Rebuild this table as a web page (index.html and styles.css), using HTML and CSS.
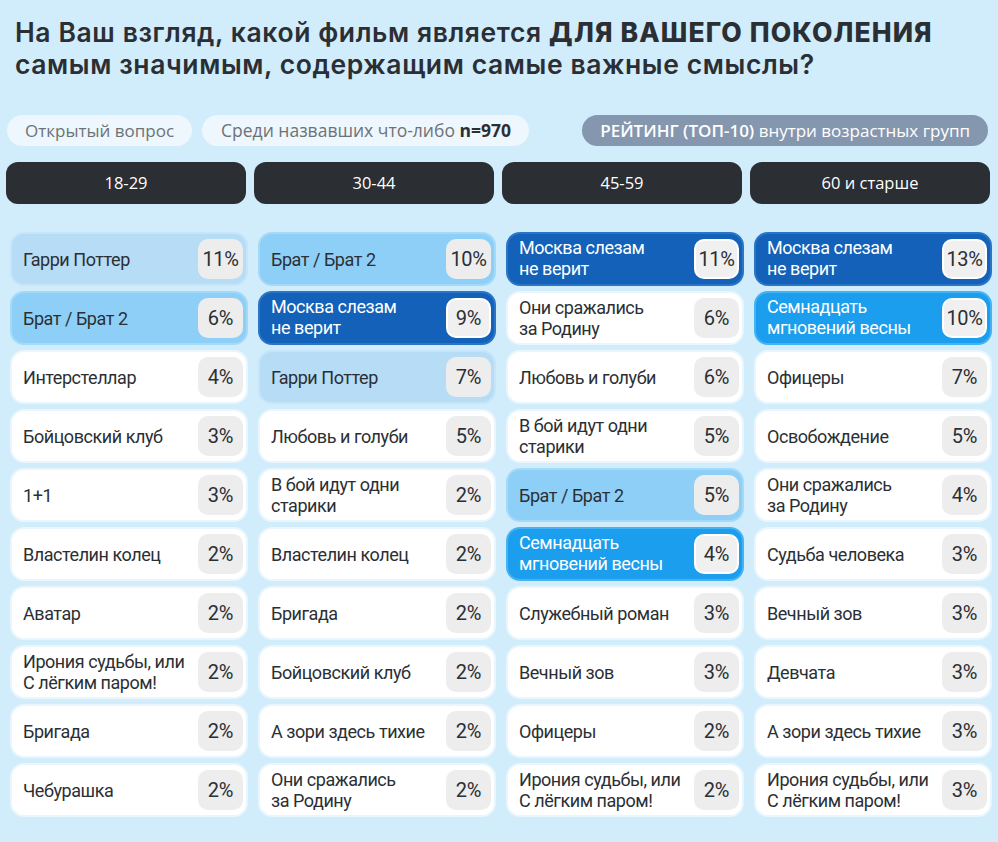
FILE: index.html
```html
<!DOCTYPE html>
<html lang="ru">
<head>
<meta charset="utf-8">
<title>Фильм поколения</title>
<link rel="stylesheet" href="styles.css">
</head>
<body>
<div class="page">
  <h1 class="title">На Ваш взгляд, какой фильм является <b>ДЛЯ ВАШЕГО ПОКОЛЕНИЯ</b><br>самым значимым, содержащим самые важные смыслы?</h1>

  <div class="pills">
    <div class="pill">Открытый вопрос</div>
    <div class="pill pill-n">Среди назвавших что-либо <b>n=970</b></div>
    <div class="pill pill-rating"><b>РЕЙТИНГ (ТОП-10)</b> внутри возрастных групп</div>
  </div>

  <div class="grid">
    <div class="col">
      <div class="head">18-29</div>
      <div class="card c-light"><span class="name">Гарри Поттер</span><span class="pct">11%</span></div>
      <div class="card c-mid"><span class="name">Брат / Брат 2</span><span class="pct">6%</span></div>
      <div class="card"><span class="name">Интерстеллар</span><span class="pct">4%</span></div>
      <div class="card"><span class="name">Бойцовский клуб</span><span class="pct">3%</span></div>
      <div class="card"><span class="name">1+1</span><span class="pct">3%</span></div>
      <div class="card"><span class="name">Властелин колец</span><span class="pct">2%</span></div>
      <div class="card"><span class="name">Аватар</span><span class="pct">2%</span></div>
      <div class="card"><span class="name">Ирония судьбы, или<br>С лёгким паром!</span><span class="pct">2%</span></div>
      <div class="card"><span class="name">Бригада</span><span class="pct">2%</span></div>
      <div class="card"><span class="name">Чебурашка</span><span class="pct">2%</span></div>
    </div>
    <div class="col">
      <div class="head">30-44</div>
      <div class="card c-mid"><span class="name">Брат / Брат 2</span><span class="pct">10%</span></div>
      <div class="card c-dark"><span class="name">Москва слезам<br>не верит</span><span class="pct">9%</span></div>
      <div class="card c-light"><span class="name">Гарри Поттер</span><span class="pct">7%</span></div>
      <div class="card"><span class="name">Любовь и голуби</span><span class="pct">5%</span></div>
      <div class="card"><span class="name">В бой идут одни<br>старики</span><span class="pct">2%</span></div>
      <div class="card"><span class="name">Властелин колец</span><span class="pct">2%</span></div>
      <div class="card"><span class="name">Бригада</span><span class="pct">2%</span></div>
      <div class="card"><span class="name">Бойцовский клуб</span><span class="pct">2%</span></div>
      <div class="card"><span class="name">А зори здесь тихие</span><span class="pct">2%</span></div>
      <div class="card"><span class="name">Они сражались<br>за Родину</span><span class="pct">2%</span></div>
    </div>
    <div class="col">
      <div class="head">45-59</div>
      <div class="card c-dark"><span class="name">Москва слезам<br>не верит</span><span class="pct">11%</span></div>
      <div class="card"><span class="name">Они сражались<br>за Родину</span><span class="pct">6%</span></div>
      <div class="card"><span class="name">Любовь и голуби</span><span class="pct">6%</span></div>
      <div class="card"><span class="name">В бой идут одни<br>старики</span><span class="pct">5%</span></div>
      <div class="card c-mid"><span class="name">Брат / Брат 2</span><span class="pct">5%</span></div>
      <div class="card c-bright"><span class="name">Семнадцать<br>мгновений весны</span><span class="pct">4%</span></div>
      <div class="card"><span class="name">Служебный роман</span><span class="pct">3%</span></div>
      <div class="card"><span class="name">Вечный зов</span><span class="pct">3%</span></div>
      <div class="card"><span class="name">Офицеры</span><span class="pct">2%</span></div>
      <div class="card"><span class="name">Ирония судьбы, или<br>С лёгким паром!</span><span class="pct">2%</span></div>
    </div>
    <div class="col">
      <div class="head">60 и старше</div>
      <div class="card c-dark"><span class="name">Москва слезам<br>не верит</span><span class="pct">13%</span></div>
      <div class="card c-bright"><span class="name">Семнадцать<br>мгновений весны</span><span class="pct">10%</span></div>
      <div class="card"><span class="name">Офицеры</span><span class="pct">7%</span></div>
      <div class="card"><span class="name">Освобождение</span><span class="pct">5%</span></div>
      <div class="card"><span class="name">Они сражались<br>за Родину</span><span class="pct">4%</span></div>
      <div class="card"><span class="name">Судьба человека</span><span class="pct">3%</span></div>
      <div class="card"><span class="name">Вечный зов</span><span class="pct">3%</span></div>
      <div class="card"><span class="name">Девчата</span><span class="pct">3%</span></div>
      <div class="card"><span class="name">А зори здесь тихие</span><span class="pct">3%</span></div>
      <div class="card"><span class="name">Ирония судьбы, или<br>С лёгким паром!</span><span class="pct">3%</span></div>
    </div>
  </div>
</div>
</body>
</html>
```

FILE: styles.css
```css
* { box-sizing: border-box; }
html, body {
  margin: 0;
  padding: 0;
  background: #d1ecfb;
}
body {
  width: 998px;
  height: 842px;
  overflow: hidden;
  font-family: "Open Sans", "Noto Sans", sans-serif;
  color: #2b2f34;
}
.page {
  padding: 16px 8px 0 6px;
}
.title {
  margin: 0 0 0 9px;
  font-family: Inter, "Open Sans", sans-serif;
  font-size: 26.5px;
  line-height: 32px;
  font-weight: 600;
  color: #2b2f34;
  letter-spacing: 0.6px;
}
.title b { font-weight: 800; letter-spacing: 1.1px; }

.pills {
  display: flex;
  align-items: center;
  gap: 10px;
  margin: 35px 0 0 1px;
}
.pill {
  height: 31px;
  line-height: 31px;
  padding: 0 18px;
  border-radius: 16px;
  background: #eef7fd;
  color: #6d7277;
  font-size: 17px;
  white-space: nowrap;
}
.pill b { color: #2b2f34; font-weight: 700; }
.pill-n { padding: 0 18px 0 19px; font-size: 17.5px; }
.pill-rating {
  margin-left: auto;
  margin-right: 2px;
  background: #8597af;
  color: #ffffff;
  padding: 0 18px;
  font-size: 17px;
}
.pill-rating b { color: #ffffff; font-weight: 600; }

.grid {
  display: grid;
  grid-template-columns: repeat(4, 240px);
  column-gap: 8px;
  margin-top: 16px;
}
.col {
  display: flex;
  flex-direction: column;
  gap: 5px;
}
.head {
  height: 42px;
  line-height: 42px;
  margin-bottom: 23px;
  border-radius: 12px;
  background: #2b2e33;
  color: #ffffff;
  text-align: center;
  font-size: 16.5px;
  font-weight: 500;
}
.card {
  height: 54px;
  margin: 0 -2px 0 4px;
  display: flex;
  align-items: center;
  justify-content: space-between;
  padding: 0 3px 0 11px;
  border-radius: 14px;
  background: #ffffff;
  border: 2px solid #e9f6fe;
  font-family: Roboto, "Noto Sans", sans-serif;
  color: #2b2f34;
}
.name {
  font-size: 18px;
  line-height: 21px;
  letter-spacing: -0.45px;
}
.pct {
  width: 45px;
  height: 40px;
  line-height: 40px;
  border-radius: 10px;
  background: #ededed;
  text-align: center;
  font-size: 20px;
  letter-spacing: -0.3px;
  color: #2b2f34;
  flex: none;
}
.c-light { background: #b6dcf6; border-color: #c6e5fa; }
.c-mid { background: #8ecff7; border-color: #a4daf9; }
.c-dark { background: #1361b8; border-color: #2a75c6; color: #ffffff; }
.c-bright { background: #1b9eee; border-color: #45b2f3; color: #ffffff; }
.c-dark .name, .c-bright .name { align-self: flex-start; padding-top: 3px; }
.c-dark .pct, .c-bright .pct { background: #f0f0f0; border: 2px solid #ffffff; line-height: 36px; }
```
